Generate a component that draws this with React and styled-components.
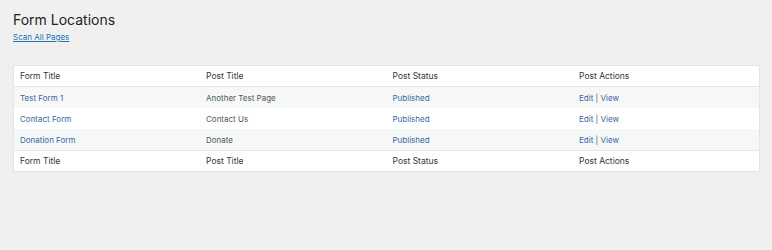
import React from "react";
import styled, { createGlobalStyle } from "styled-components";

const Global = createGlobalStyle`
  html, body { margin: 0; padding: 0; background: #f0f0f1; }
  body { font-family: Inter, "Noto Sans", sans-serif; color: #3c434a; }
`;

const Page = styled.div`
  padding: 11px 12px 0 13px;
  display: flex;
  flex-direction: column;
`;

const Title = styled.h1`
  margin: 0;
  font-size: 14px;
  font-weight: 400;
  line-height: 18px;
  color: #1d2327;
`;

const ScanLink = styled.a`
  margin-top: 2px;
  font-size: 8px;
  line-height: 12px;
  color: #2271b1;
  text-decoration: underline;
  align-self: flex-start;
`;

const Table = styled.table`
  margin-top: 22px;
  width: 747px;
  border-collapse: collapse;
  table-layout: fixed;
  background: #fff;
  border: 1px solid #e4e4e6;
  box-shadow: 0 1px 1px rgba(0,0,0,0.04);
`;

const Head = styled.th`
  text-align: left;
  font-weight: 400;
  font-size: 8.5px;
  color: #32373c;
  padding: 0 6px;
  height: 20px;
  border-${p => (p.$foot ? "top" : "bottom")}: 1px solid #e6e6e8;
`;

const Row = styled.tr`
  background: ${p => (p.$alt ? "#f6f7f7" : "#fff")};
`;

const Cell = styled.td`
  font-size: 8px;
  color: #50575e;
  padding: 0 6px;
  height: 21px;
`;

const Link = styled.a`
  color: #3469a0;
  text-decoration: none;
`;

const Sep = styled.span`
  color: #50575e;
`;

const rows = [
  ["Test Form 1", "Another Test Page"],
  ["Contact Form", "Contact Us"],
  ["Donation Form", "Donate"],
];

const heads = ["Form Title", "Post Title", "Post Status", "Post Actions"];

export default function App() {
  return (
    <>
      <Global />
      <Page>
        <Title>Form Locations</Title>
        <ScanLink href="#">Scan All Pages</ScanLink>
        <Table>
          <thead>
            <tr>{heads.map(h => <Head key={h}>{h}</Head>)}</tr>
          </thead>
          <tbody>
            {rows.map(([f, p], i) => (
              <Row key={f} $alt={i % 2 === 0}>
                <Cell><Link href="#">{f}</Link></Cell>
                <Cell>{p}</Cell>
                <Cell><Link href="#">Published</Link></Cell>
                <Cell>
                  <Link href="#">Edit</Link> <Sep>|</Sep> <Link href="#">View</Link>
                </Cell>
              </Row>
            ))}
          </tbody>
          <tfoot>
            <tr>{heads.map(h => <Head key={h} $foot>{h}</Head>)}</tr>
          </tfoot>
        </Table>
      </Page>
    </>
  );
}
